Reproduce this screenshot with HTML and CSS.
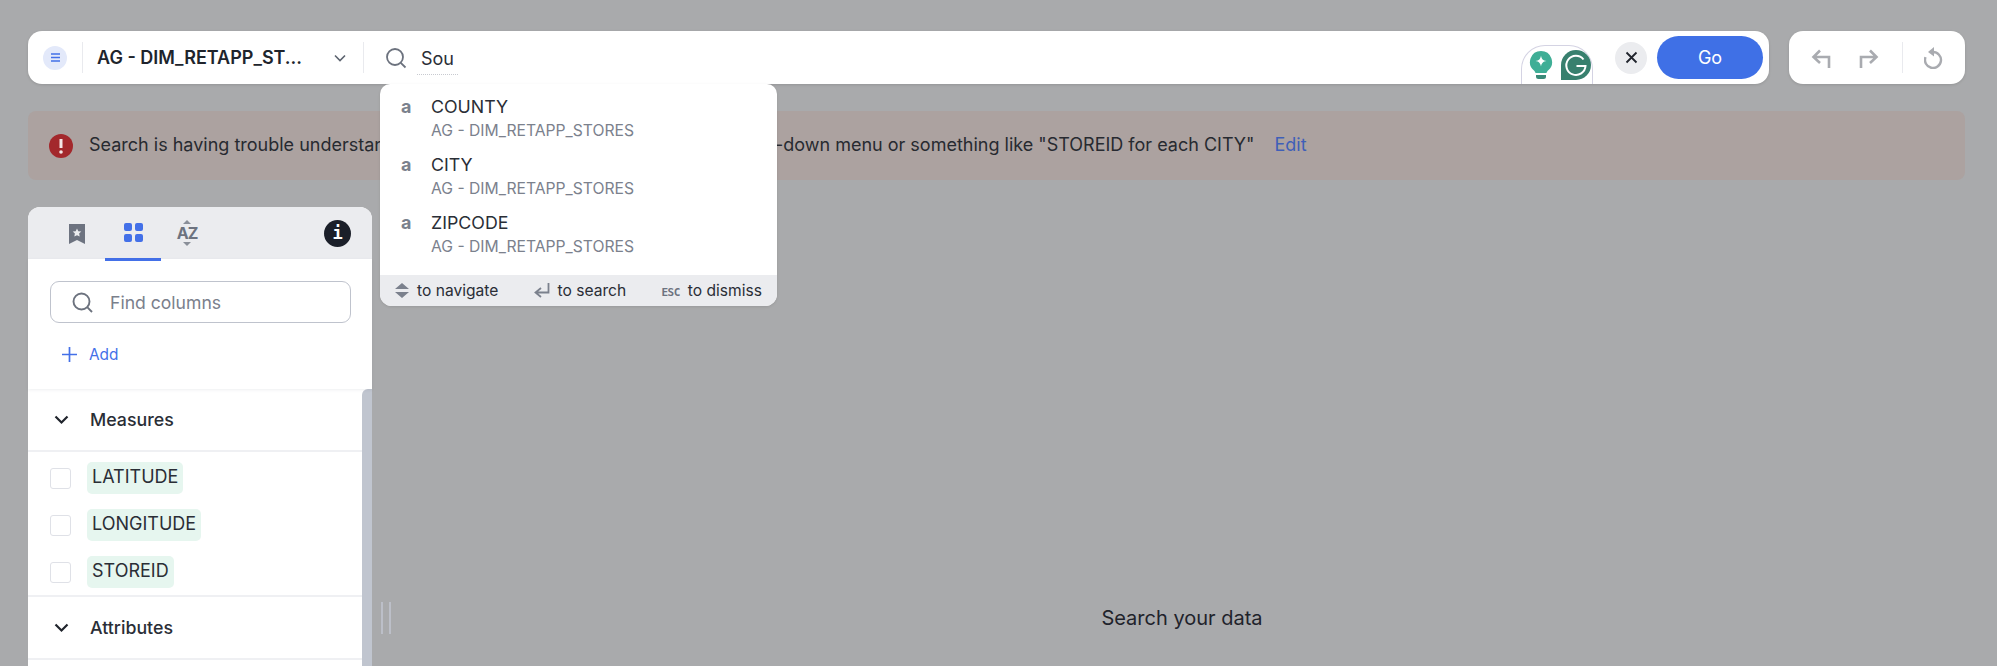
FILE: index.html
```html
<!DOCTYPE html>
<html lang="en">
<head>
<meta charset="utf-8">
<title>Search your data</title>
<link rel="stylesheet" href="styles.css">
</head>
<body>
<div class="page">
  <div class="toprow">
    <div class="searchbar">
      <span class="source-logo"><svg width="11" height="11" viewBox="0 0 11 11"><path d="M1 2h9M1 5.500h9M1 9h9" stroke="#4370e8" stroke-width="1.700" fill="none"/></svg></span>
      <span class="vline vline-a"></span>
      <span class="source-name">AG - DIM_RETAPP_ST...</span>
      <svg class="source-chevron" width="12" height="8" viewBox="0 0 12 8"><path d="M1 1.500l5 5 5-5" stroke="#5d6470" stroke-width="1.600" fill="none"/></svg>
      <span class="vline vline-b"></span>
      <svg class="search-icon" width="22" height="22" viewBox="0 0 22 22"><circle cx="10" cy="10" r="8" stroke="#6c727e" stroke-width="1.800" fill="none"/><path d="M15.800 15.800l4.700 4.700" stroke="#6c727e" stroke-width="1.800" fill="none"/></svg>
      <span class="query">Sou</span>
      <div class="grammarly">
        <svg width="24" height="30" viewBox="0 0 24 30"><path d="M12 1a11 11 0 0 1 7 19.500c-1 1-1.300 2-1.500 2.500h-11c-.2-.5-.5-1.500-1.500-2.500A11 11 0 0 1 12 1z" fill="#3fae96"/><path d="M12 5.500c.6 3.500 2 5 5.500 5.500-3.500.6-4.900 2-5.500 5.500-.6-3.500-2-4.900-5.500-5.500 3.500-.5 4.900-2 5.500-5.500z" fill="#fff"/><path d="M7 25h10v1.500a2.500 2.500 0 0 1-2.500 2.500h-5A2.500 2.500 0 0 1 7 26.500z" fill="#3a8a78"/></svg>
        <svg width="30" height="30" viewBox="0 0 30 30"><path d="M15 0a15 15 0 0 1 0 30H0V15A15 15 0 0 1 15 0z" fill="#38806e"/><path d="M22.500 9.500A9.600 9.600 0 1 0 24.500 16H15.500" stroke="#fff" stroke-width="2" fill="none"/></svg>
      </div>
      <span class="clear-btn"><svg width="13" height="13" viewBox="0 0 13 13"><path d="M1.500 1.500l10 10M11.500 1.500l-10 10" stroke="#20242c" stroke-width="1.800" fill="none"/></svg></span>
      <span class="go-btn">Go</span>
    </div>
    <div class="history">
      <svg width="20" height="20" viewBox="0 0 20 20"><path d="M18 20V9H3M9 2.500L2.500 9 9 15" stroke="#a9abb0" stroke-width="2.600" fill="none"/></svg>
      <svg class="redo" width="20" height="20" viewBox="0 0 20 20"><path d="M2 20V9h15M11 2.500L17.500 9 11 15" stroke="#a9abb0" stroke-width="2.600" fill="none"/></svg>
      <span class="vline vline-c"></span>
      <svg width="20" height="22" viewBox="0 0 20 22"><path d="M9 5a8 8 0 1 1-7.500 5.200" stroke="#a9abb0" stroke-width="2.400" fill="none"/><path d="M10 0v9.500L4 5z" fill="#a9abb0"/></svg>
    </div>
  </div>

  <div class="banner">
    <svg class="banner-icon" width="24" height="24" viewBox="0 0 24 24"><circle cx="12" cy="12" r="12" fill="#a3282c"/><path d="M12 5v9" stroke="#f3e6e6" stroke-width="3" fill="none"/><circle cx="12" cy="18" r="1.800" fill="#f3e6e6"/></svg>
    <span class="banner-text">Search is having trouble understanding your query. Try a selection from the drop-down menu or something like "STOREID for each CITY"</span>
    <span class="banner-edit">Edit</span>
  </div>

  <div class="workspace">
    <aside class="panel">
      <div class="panel-tabs">
        <span class="tab">
          <svg width="18" height="20" viewBox="0 0 18 20"><path d="M1 0h16v20l-8-4-8 4z" fill="#6d7380"/><path d="M9 4.500l1.300 2.800 3 .3-2.200 2 .6 3L9 11.200l-2.700 1.400.6-3-2.200-2 3-.3z" fill="#ebecef"/></svg>
        </span>
        <span class="tab tab-active">
          <svg width="19" height="19" viewBox="0 0 19 19" fill="#4370e8"><rect width="8" height="8" rx="2"/><rect x="11" width="8" height="8" rx="2"/><rect y="11" width="8" height="8" rx="2"/><rect x="11" y="11" width="8" height="8" rx="2"/></svg>
        </span>
        <span class="tab tab-az">
          <span class="az-arrow az-up"></span>
          <span class="az-text">AZ</span>
          <span class="az-arrow az-down"></span>
        </span>
        <span class="info">i</span>
      </div>
      <div class="panel-tools">
        <div class="find">
          <svg width="21" height="21" viewBox="0 0 21 21"><circle cx="9.500" cy="9.500" r="8" stroke="#6c727e" stroke-width="1.900" fill="none"/><path d="M15.200 15.200l4.800 4.800" stroke="#6c727e" stroke-width="1.900" fill="none"/></svg>
          <span class="find-text">Find columns</span>
        </div>
        <div class="add">
          <svg width="15" height="15" viewBox="0 0 15 15"><path d="M7.500 0v15M0 7.500h15" stroke="#4370e8" stroke-width="1.700" fill="none"/></svg>
          <span>Add</span>
        </div>
      </div>
      <div class="panel-body">
        <div class="columns">
          <div class="group-head">
            <svg width="15" height="10" viewBox="0 0 15 10"><path d="M1.500 1.500l6 6 6-6" stroke="#20242c" stroke-width="2.200" fill="none"/></svg>
            <span>Measures</span>
          </div>
          <div class="rows">
            <div class="row"><span class="check"></span><span class="tag">LATITUDE</span></div>
            <div class="row"><span class="check"></span><span class="tag">LONGITUDE</span></div>
            <div class="row"><span class="check"></span><span class="tag">STOREID</span></div>
          </div>
          <div class="group-head">
            <svg width="15" height="10" viewBox="0 0 15 10"><path d="M1.500 1.500l6 6 6-6" stroke="#20242c" stroke-width="2.200" fill="none"/></svg>
            <span>Attributes</span>
          </div>
        </div>
        <div class="scrollbar"></div>
      </div>
    </aside>
    <div class="handle"><span></span><span></span></div>
    <div class="empty">Search your data</div>
  </div>
</div>

<div class="dropdown">
  <div class="suggestions">
    <div class="sug"><span class="sug-type">a</span><div><div class="sug-name">COUNTY</div><div class="sug-src">AG - DIM_RETAPP_STORES</div></div></div>
    <div class="sug"><span class="sug-type">a</span><div><div class="sug-name">CITY</div><div class="sug-src">AG - DIM_RETAPP_STORES</div></div></div>
    <div class="sug"><span class="sug-type">a</span><div><div class="sug-name">ZIPCODE</div><div class="sug-src">AG - DIM_RETAPP_STORES</div></div></div>
  </div>
  <div class="hints">
    <span class="hint"><svg width="14" height="15" viewBox="0 0 14 15" fill="#7b818d"><path d="M7 0l7 6H0zM0 9h14l-7 6z"/></svg>to navigate</span>
    <span class="hint"><svg width="16" height="16" viewBox="0 0 16 16"><path d="M14.500 0v9.500H2M7 5L1.500 9.500 7 14" stroke="#7b818d" stroke-width="1.800" fill="none"/></svg>to search</span>
    <span class="hint"><span class="esc">ESC</span>to dismiss</span>
  </div>
</div>
</body>
</html>
```
FILE: styles.css
```css
* { box-sizing: border-box; }
html, body { margin: 0; height: 666px; overflow: hidden; }
body { background: #a9aaac; font-family: Inter, "Liberation Sans", sans-serif; color: #20242c; position: relative; }
.page { padding: 31px 32px 0 28px; }
.toprow { display: flex; gap: 20px; height: 53px; }
.searchbar { position: relative; width: 1741px; display: flex; align-items: center; background: #fff; border-radius: 14px; box-shadow: 0 1px 3px rgba(0,0,0,.12); padding: 0 6px 0 15px; }
.source-logo { width: 24px; height: 24px; border-radius: 50%; background: #e3e9fa; display: flex; align-items: center; justify-content: center; flex: none; }
.vline { width: 1px; background: #e9eaee; flex: none; }
.vline-a { height: 31px; margin-left: 15px; }
.source-name { margin-left: 14px; width: 230px; font-size: 18px; font-weight: 600; white-space: nowrap; }
.source-chevron { flex: none; margin-left: 7px; }
.vline-b { height: 31px; margin-left: 17px; }
.search-icon { flex: none; margin-left: 21px; }
.query { margin-left: 10px; font-size: 18px; padding: 3px 4px 3px; border-bottom: 1px dotted #c8cad0; line-height: 24px; margin-top: 4px; color: #2a2e36; }
.grammarly { position: absolute; left: 1493px; top: 14px; width: 72px; height: 39px; border: 1px solid #d4d3e3; border-bottom: 0; border-radius: 24px 24px 0 0 / 24px 24px 0 0; display: flex; gap: 8px; align-items: flex-start; padding: 4px 0 0 7px; background: #fff; }
.clear-btn { margin-left: auto; width: 32px; height: 32px; border-radius: 50%; background: #ebecef; display: flex; align-items: center; justify-content: center; }
.go-btn { margin-left: 10px; width: 106px; height: 43px; border-radius: 22px; background: #3f70e6; color: #fff; font-size: 18px; display: flex; align-items: center; justify-content: center; }
.history { width: 176px; background: #fff; border-radius: 14px; box-shadow: 0 1px 3px rgba(0,0,0,.12); display: flex; align-items: center; padding-left: 22px; }
.redo { margin-left: 28px; }
.vline-c { height: 31px; margin: 0 21px 0 23px; }
.banner { margin-top: 27px; height: 69px; border-radius: 8px; background: #aca2a0; display: flex; align-items: center; padding-left: 21px; font-size: 18px; }
.banner-icon { flex: none; }
.banner-text { margin: 0 0 2px 16px; white-space: nowrap; color: #272a30; }
.banner-edit { margin: 0 0 2px 20px; color: #3f5fb8; }
.workspace { margin-top: 27px; height: 821px; display: flex; }
.panel { width: 344px; background: #fff; border-radius: 12px 12px 0 0; display: flex; flex-direction: column; flex: none; }
.panel-tabs { height: 52px; background: #ebecef; border-radius: 12px 12px 0 0; display: flex; align-items: stretch; padding-left: 21px; padding-right: 21px; }
.tab { width: 56px; display: flex; align-items: center; justify-content: center; padding-top: 2px; }
.tab-active { border-bottom: 3px solid #4370e8; height: 54px; padding-bottom: 2px; }
.tab-az { flex-direction: column; gap: 1px; color: #6d7380; margin-left: -2px; padding-top: 0; }
.az-text { font-size: 16px; font-weight: 700; line-height: 16px; letter-spacing: -1px; }
.az-arrow { width: 0; height: 0; border-left: 4px solid transparent; border-right: 4px solid transparent; }
.az-up { border-bottom: 4px solid #8a8f99; }
.az-down { border-top: 4px solid #8a8f99; }
.info { margin: auto 0 auto auto; width: 27px; height: 27px; border-radius: 50%; background: #1b1f29; color: #fff; font-family: "DejaVu Sans Mono", monospace; font-size: 17px; font-weight: 700; display: flex; align-items: center; justify-content: center; }
.panel-tools { height: 130px; padding: 22px 21px 0 22px; box-shadow: 0 1px 3px rgba(40,50,80,.08); position: relative; }
.find { height: 42px; border: 1px solid #bfc3cd; border-radius: 9px; display: flex; align-items: center; padding-left: 21px; }
.find-text { margin-left: 17px; font-size: 17.600px; color: #7a808c; }
.add { margin-top: 22px; display: flex; align-items: center; gap: 12px; padding-left: 12px; font-size: 15.400px; color: #4370e8; }
.panel-body { flex: 1; display: flex; min-height: 0; }
.columns { flex: 1; }
.scrollbar { width: 10px; background: #c0c5cf; border-radius: 6px 0 0 0; }
.group-head { height: 63px; display: flex; align-items: center; gap: 21px; padding-left: 26px; font-size: 17.800px; font-weight: 500; border-bottom: 2px solid #eff0f3; color: #2a2e36; }
.rows { padding: 10px 0 7px; border-bottom: 2px solid #eff0f3; display: flex; flex-direction: column; gap: 15px; }
.row { height: 32px; display: flex; align-items: center; padding-left: 22px; gap: 16px; }
.check { width: 21px; height: 21px; border: 1.500px solid #dfe1e7; border-radius: 3px; flex: none; }
.tag { height: 32px; background: #e6f6ef; border-radius: 5px; padding: 0 5px; font-size: 18px; line-height: 30px; color: #2a2e36; }
.handle { width: 27px; flex: none; display: flex; gap: 6px; align-items: center; padding-left: 9px; }
.handle span { width: 2px; height: 32px; background: #bcbfc8; }
.empty { flex: 1; display: flex; align-items: center; justify-content: center; font-size: 20px; color: #1f232b; }
.dropdown { position: absolute; left: 380px; top: 84px; width: 397px; height: 222px; background: #fff; border-radius: 10px 10px 12px 12px; display: flex; flex-direction: column; overflow: hidden; box-shadow: 0 1px 3px rgba(0,0,0,.1); }
.suggestions { flex: 1; padding: 9px 0 0 21px; }
.sug { height: 58px; display: flex; gap: 18px; }
.sug-type { width: 12px; font-size: 18px; font-weight: 700; color: #7b818d; line-height: 28px; }
.sug-name { font-size: 17.800px; line-height: 28px; color: #2a2e36; }
.sug-src { font-size: 15.700px; line-height: 18px; color: #7b818d; margin-top: 1px; }
.hints { height: 31px; background: #ebecef; display: flex; align-items: center; justify-content: space-between; padding: 0 15px; font-size: 15.600px; color: #2a2e36; }
.hint { display: flex; align-items: center; gap: 8px; }
.esc { font-size: 11px; font-weight: 700; color: #6d7380; font-family: "DejaVu Sans Mono", monospace; letter-spacing: -.5px; margin-top: 3px; }
```
